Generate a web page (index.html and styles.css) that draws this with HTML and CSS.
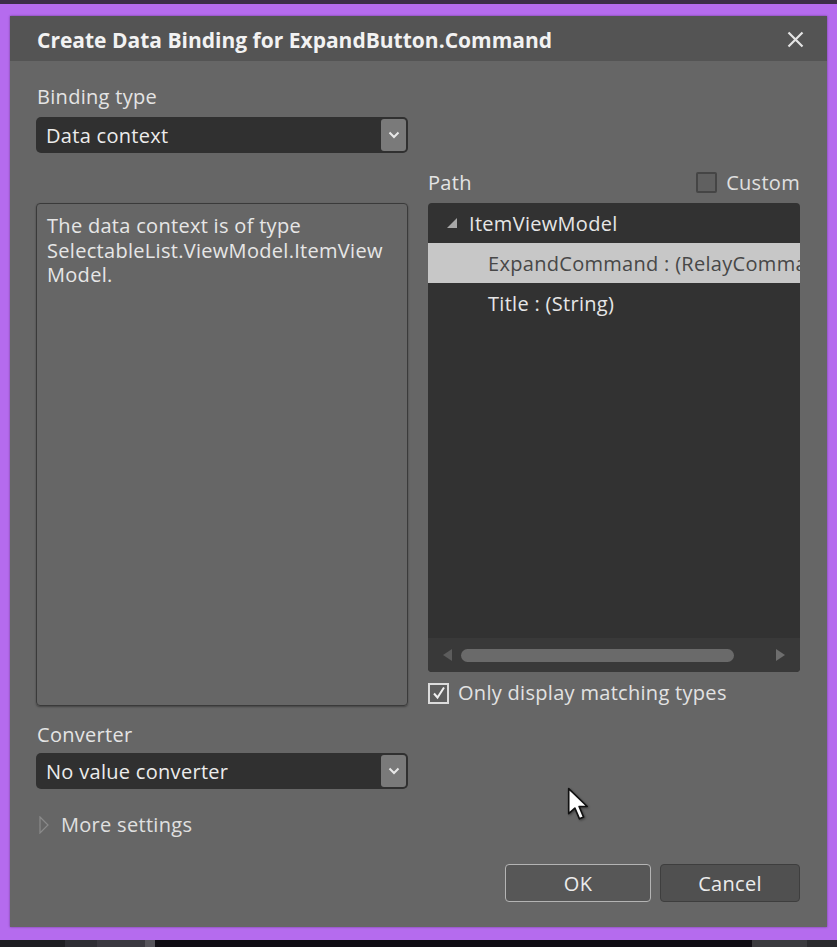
FILE: index.html
```html
<!DOCTYPE html>
<html>
<head>
<meta charset="utf-8">
<link rel="stylesheet" href="styles.css">
</head>
<body>
<div class="top-strip"></div>
<div class="frame">
  <div class="dialog">
    <div class="titlebar">
      <span class="title">Create Data Binding for ExpandButton.Command</span>
      <svg class="close" width="17" height="17" viewBox="0 0 17 17"><path d="M1.5 1.5 L15.5 15.5 M15.5 1.5 L1.5 15.5" stroke="#e4e4e4" stroke-width="2.2" fill="none"/></svg>
    </div>
    <div class="content">
      <div class="label first">Binding type</div>
      <div class="dropdown">
        <span>Data context</span>
        <span class="dd-btn"><svg width="12" height="8" viewBox="0 0 12 8"><path d="M1.5 1.5 L6 6 L10.5 1.5" stroke="#e8e8e8" stroke-width="2" fill="none"/></svg></span>
      </div>
      <div class="main">
        <div class="col">
          <div class="spacer"></div>
          <div class="textbox">The data context is of type<br>SelectableList.ViewModel.ItemView<br>Model.</div>
        </div>
        <div class="col">
          <div class="path-head">
            <span class="label">Path</span>
            <span class="custom"><span class="cb dark"></span><span>Custom</span></span>
          </div>
          <div class="tree">
            <div class="rows">
              <div class="row root"><svg class="tri" width="10" height="10" viewBox="0 0 10 10"><path d="M10 0 L10 10 L0 10 Z" fill="#a8a8a8"/></svg><span>ItemViewModel</span></div>
              <div class="row child selected"><span>ExpandCommand : (RelayCommand)</span></div>
              <div class="row child"><span>Title : (String)</span></div>
            </div>
            <div class="hscroll">
              <svg width="10" height="12" viewBox="0 0 10 12"><path d="M9 0 L9 12 L0 6 Z" fill="#5c5c5c"/></svg>
              <div class="thumb"></div>
              <svg width="10" height="12" viewBox="0 0 10 12"><path d="M1 0 L1 12 L10 6 Z" fill="#6e6e6e"/></svg>
            </div>
          </div>
          <div class="only">
            <span class="cb light"><svg width="16" height="16" viewBox="0 0 16 16"><path d="M3 8.5 L6.5 12.5 L13 2.5" stroke="#f0f0f0" stroke-width="2" fill="none"/></svg></span>
            <span>Only display matching types</span>
          </div>
        </div>
      </div>
      <div class="label conv">Converter</div>
      <div class="dropdown">
        <span>No value converter</span>
        <span class="dd-btn"><svg width="12" height="8" viewBox="0 0 12 8"><path d="M1.5 1.5 L6 6 L10.5 1.5" stroke="#e8e8e8" stroke-width="2" fill="none"/></svg></span>
      </div>
      <div class="more">
        <svg width="10" height="18" viewBox="0 0 10 18"><path d="M1 1 L9 9 L1 17 Z" stroke="#8a8a8a" stroke-width="1.2" fill="none"/></svg>
        <span>More settings</span>
      </div>
      <div class="buttons">
        <button class="btn ok">OK</button>
        <button class="btn cancel">Cancel</button>
      </div>
    </div>
    <svg class="cursor" width="25" height="37" viewBox="0 0 24 36"><path d="M1.5 1.5 L1.5 26 L7.5 20.5 L12 31 L16 29.3 L11.6 19 L19.5 19 Z" fill="#ffffff" stroke="#111" stroke-width="1.6" stroke-linejoin="round"/></svg>
  </div>
</div>
<div class="bottom-strip">
  <span class="blk b1"></span><span class="blk b2"></span><span class="blk b3"></span><span class="blk b4"></span><span class="gap"></span><span class="blk b5"></span><span class="blk b6"></span>
</div>
</body>
</html>
```
FILE: styles.css
```css
* { box-sizing: border-box; }
html, body { margin: 0; padding: 0; }
body {
  width: 837px;
  height: 947px;
  background: #151119;
  font-family: "Open Sans", "Noto Sans", sans-serif;
  color: #e2e2e2;
  overflow: hidden;
}
.top-strip { height: 4px; background: #3c2e48; }
.frame {
  background: #b56bee;
  padding: 12px 10px 13px 10px;
}
.dialog {
  position: relative;
  height: 911px;
  background: #666666;
  box-shadow: 0 0 2px rgba(60,30,80,0.6);
}
.titlebar {
  height: 45px;
  background: #545454;
  display: flex;
  align-items: center;
  justify-content: space-between;
  padding: 2px 23px 0 27px;
}
.title {
  font-weight: 700;
  font-size: 21px;
  color: #f2f2f2;
}
.content {
  padding: 24px 27px 0 26px;
  font-size: 20px;
  letter-spacing: 0.3px;
}
.label {
  font-size: 20px;
  line-height: 24px;
  color: #e4e4e4;
}
.label.first { margin-bottom: 8px; padding-left: 1px; }
.dropdown {
  width: 372px;
  height: 36px;
  background: #303030;
  border-radius: 5px;
  display: flex;
  align-items: center;
  justify-content: space-between;
  padding: 0 2px 0 10px;
  font-size: 20px;
  color: #ececec;
}
.dd-btn {
  width: 25px;
  height: 32px;
  background: #7a7a7a;
  border-radius: 3px;
  display: flex;
  align-items: center;
  justify-content: center;
}
.main {
  display: grid;
  grid-template-columns: 372px 372px;
  column-gap: 20px;
}
.col { display: flex; flex-direction: column; }
.spacer { height: 50px; }
.textbox {
  height: 503px;
  border: 1px solid #3a3a3a;
  border-radius: 4px;
  box-shadow: 0 1px 2px rgba(0,0,0,0.35);
  padding: 10px 10px;
  font-size: 20px;
  line-height: 24.5px;
  color: #e6e6e6;
  white-space: nowrap;
}
.path-head {
  height: 50px;
  display: flex;
  align-items: center;
  justify-content: space-between;
  padding-top: 9px;
}
.custom { display: flex; align-items: center; gap: 9px; font-size: 20px; color: #e0e0e0; }
.cb {
  width: 21px;
  height: 21px;
  display: inline-flex;
  align-items: center;
  justify-content: center;
}
.cb.dark { border: 2px solid #454545; background: #606060; border-radius: 2px; }
.cb.light { border: 2px solid #dcdcdc; background: #5e5e5e; }
.tree {
  height: 469px;
  background: #323232;
  border-radius: 4px;
  overflow: hidden;
  display: flex;
  flex-direction: column;
}
.rows { flex: 1; }
.row {
  height: 40px;
  display: flex;
  align-items: center;
  white-space: nowrap;
  overflow: hidden;
  font-size: 20px;
  color: #e6e6e6;
}
.row.root { padding-left: 19px; }
.row.root .tri { margin-right: 12px; }
.row.child { padding-left: 60px; }
.row.selected { background: #c7c7c7; color: #484848; }
.hscroll {
  height: 34px;
  background: #393939;
  display: flex;
  align-items: center;
  padding: 0 15px 0 15px;
  gap: 8px;
}
.thumb {
  height: 13px;
  width: 273px;
  background: #6a6a6a;
  border-radius: 7px;
  margin-right: auto;
}
.only {
  margin-top: 10px;
  display: flex;
  align-items: center;
  gap: 9px;
  font-size: 20px;
  line-height: 22px;
  color: #e2e2e2;
}
.label.conv { margin-top: 17px; margin-bottom: 6px; padding-left: 1px; }
.more {
  margin-top: 24px;
  display: flex;
  align-items: center;
  gap: 12px;
  padding-left: 3px;
  font-size: 20px;
  line-height: 24px;
  color: #e0e0e0;
}
.buttons {
  margin-top: 27px;
  display: flex;
  justify-content: flex-end;
  gap: 9px;
}
.btn {
  height: 38px;
  font-family: "Open Sans", "Noto Sans", sans-serif;
  font-size: 20px;
  letter-spacing: 0.3px;
  color: #ececec;
  border-radius: 4px;
  padding: 0;
}
.btn.ok { width: 146px; background: #575757; border: 1.5px solid #b4b4b4; }
.btn.cancel { width: 140px; background: #505050; border: 1px solid #3e3e3e; }
.cursor {
  position: absolute;
  left: 557px;
  top: 771px;
  filter: drop-shadow(1px 1px 1px rgba(0,0,0,0.4));
}
.bottom-strip {
  height: 7px;
  display: flex;
  background: #100d14;
}
.blk { display: block; height: 7px; }
.b1 { width: 65px; background: #1e1e22; }
.b2 { width: 32px; background: #2e2e34; }
.b3 { width: 48px; background: #3a3840; }
.b4 { width: 10px; background: #55535a; }
.gap { flex: 1; }
.b5 { width: 55px; background: #3a3a3e; }
.b6 { width: 30px; background: #2a2a2e; }
```
